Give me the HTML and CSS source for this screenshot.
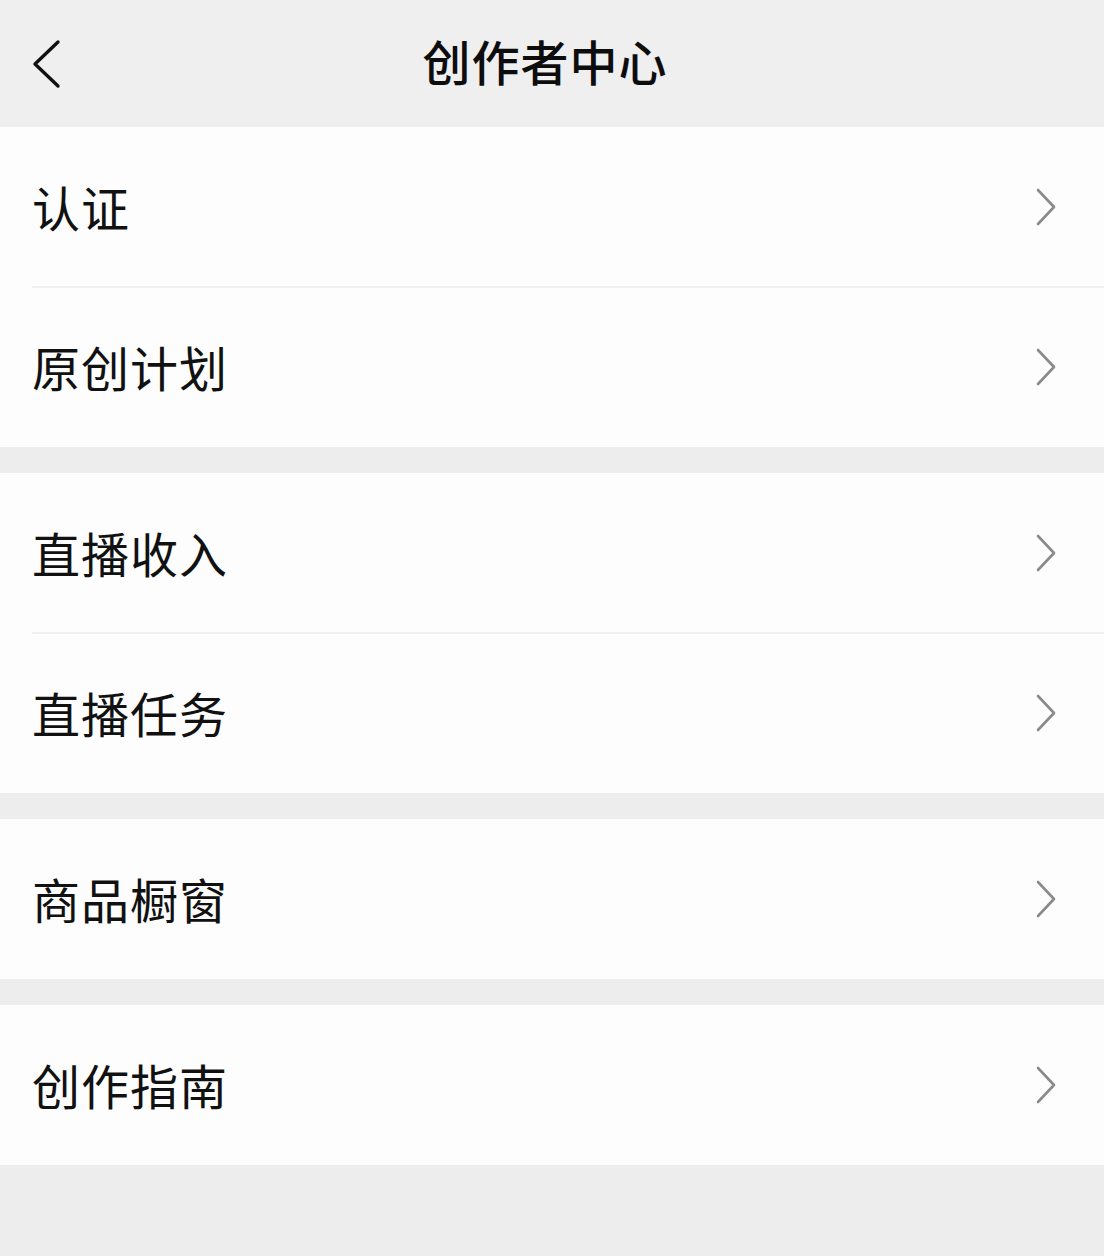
FILE: index.html
```html
<!DOCTYPE html>
<html lang="zh-CN">
<head>
<meta charset="utf-8">
<title>创作者中心</title>
<link rel="stylesheet" href="styles.css">
</head>
<body>
<div class="page">
  <header class="topbar">
    <span class="back">
      <svg width="32" height="52" viewBox="0 0 32 52"><path d="M28 4 L5 26 L28 48" fill="none" stroke="#111" stroke-width="3.4" stroke-linecap="round" stroke-linejoin="round"/></svg>
    </span>
    <h1 class="title">创作者中心</h1>
  </header>

  <section class="group">
    <div class="row"><span class="label">认证</span><span class="arrow"><svg width="24" height="40" viewBox="0 0 24 40"><path d="M4 3 L20 20 L4 37" fill="none" stroke="#8a8a8a" stroke-width="2.6" stroke-linecap="round" stroke-linejoin="round"/></svg></span></div>
    <div class="row"><span class="label">原创计划</span><span class="arrow"><svg width="24" height="40" viewBox="0 0 24 40"><path d="M4 3 L20 20 L4 37" fill="none" stroke="#8a8a8a" stroke-width="2.6" stroke-linecap="round" stroke-linejoin="round"/></svg></span></div>
  </section>

  <section class="group">
    <div class="row"><span class="label">直播收入</span><span class="arrow"><svg width="24" height="40" viewBox="0 0 24 40"><path d="M4 3 L20 20 L4 37" fill="none" stroke="#8a8a8a" stroke-width="2.6" stroke-linecap="round" stroke-linejoin="round"/></svg></span></div>
    <div class="row"><span class="label">直播任务</span><span class="arrow"><svg width="24" height="40" viewBox="0 0 24 40"><path d="M4 3 L20 20 L4 37" fill="none" stroke="#8a8a8a" stroke-width="2.6" stroke-linecap="round" stroke-linejoin="round"/></svg></span></div>
  </section>

  <section class="group">
    <div class="row"><span class="label">商品橱窗</span><span class="arrow"><svg width="24" height="40" viewBox="0 0 24 40"><path d="M4 3 L20 20 L4 37" fill="none" stroke="#8a8a8a" stroke-width="2.6" stroke-linecap="round" stroke-linejoin="round"/></svg></span></div>
  </section>

  <section class="group">
    <div class="row"><span class="label">创作指南</span><span class="arrow"><svg width="24" height="40" viewBox="0 0 24 40"><path d="M4 3 L20 20 L4 37" fill="none" stroke="#8a8a8a" stroke-width="2.6" stroke-linecap="round" stroke-linejoin="round"/></svg></span></div>
  </section>
</div>
</body>
</html>
```

FILE: styles.css
```css
* { box-sizing: border-box; }
html, body {
  margin: 0;
  padding: 0;
  background: #ededed;
}
body {
  font-family: "Noto Sans CJK SC", "Noto Sans", sans-serif;
  color: #111;
}
.page {
  width: 1104px;
  min-height: 1256px;
  background: #ededed;
}
.topbar {
  height: 127px;
  display: flex;
  align-items: center;
  justify-content: center;
  position: relative;
  background: #efefef;
}
.back {
  position: absolute;
  left: 30px;
  top: 38px;
  display: flex;
}
.title {
  margin: 0 0 0 -14px;
  font-size: 48px;
  font-weight: 500;
  letter-spacing: 1px;
  line-height: 1;
  color: #0d0d0d;
  position: relative;
  top: -4px;
}
.group {
  background: #fdfdfd;
  margin-bottom: 26px;
}
.row {
  height: 160px;
  display: flex;
  align-items: center;
  justify-content: space-between;
  padding: 0 46px 0 32px;
  position: relative;
}
.row + .row::before {
  content: "";
  position: absolute;
  left: 32px;
  right: 0;
  top: -1px;
  height: 2px;
  background: #f0f0f0;
}
.label {
  font-size: 48px;
  font-weight: 400;
  letter-spacing: 1px;
  line-height: 1;
  color: #111;
  margin-top: -2px;
}
.arrow {
  display: flex;
}
```
